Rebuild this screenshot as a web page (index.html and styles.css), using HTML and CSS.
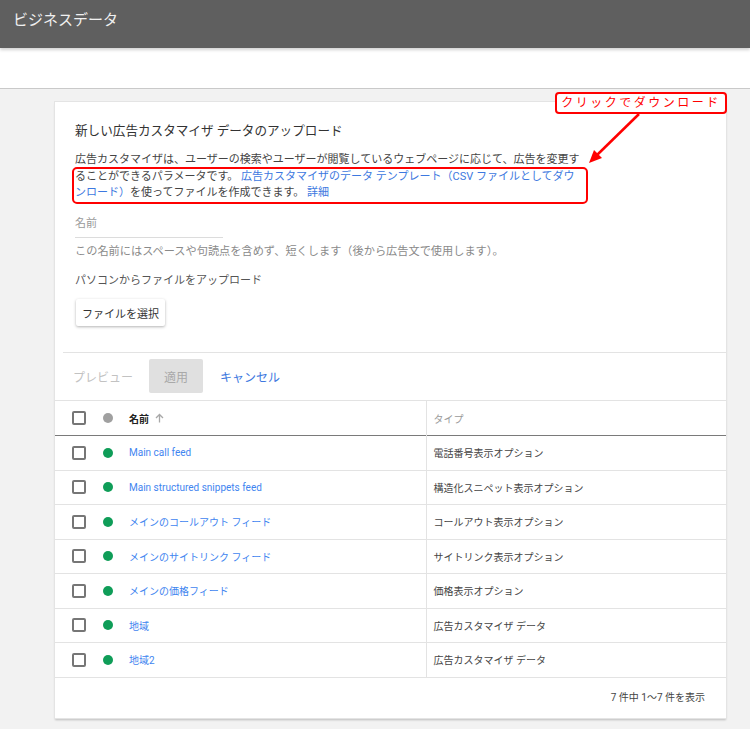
FILE: index.html
```html
<!DOCTYPE html>
<html lang="ja">
<head>
<meta charset="utf-8">
<title>ビジネスデータ</title>
<link rel="stylesheet" href="styles.css">
</head>
<body>
<header class="topbar"><span class="topbar-title">ビジネスデータ</span></header>
<div class="subbar"></div>
<main class="content">
  <section class="card">
    <div class="form">
      <h1 class="form-title">新しい広告カスタマイザ データのアップロード</h1>
      <p class="desc">広告カスタマイザは、ユーザーの検索やユーザーが閲覧しているウェブページに応じて、広告を変更す<br>ることができるパラメータです。 <a class="link">広告カスタマイザのデータ テンプレート（CSV ファイルとしてダウ<br>ンロード）</a>を使ってファイルを作成できます。 <a class="link">詳細</a></p>
      <div class="field">名前</div>
      <p class="hint">この名前にはスペースや句読点を含めず、短くします（後から広告文で使用します）。</p>
      <p class="upload-label">パソコンからファイルをアップロード</p>
      <button class="file-btn">ファイルを選択</button>
    </div>
    <div class="actions">
      <span class="preview">プレビュー</span>
      <button class="apply">適用</button>
      <span class="cancel">キャンセル</span>
    </div>
    <table class="grid">
      <thead>
        <tr>
          <th class="c-name"><div class="namecell"><span class="cb"></span><span class="dot gray"></span><span class="hname">名前</span><svg class="sort" width="9" height="10" viewBox="0 0 9 10"><path d="M4.5 9.5V1.5M1 5L4.5 1.5 8 5" fill="none" stroke="#a8a8a8" stroke-width="1.3"/></svg></div></th>
          <th class="c-type htype">タイプ</th>
        </tr>
      </thead>
      <tbody>
        <tr><td class="c-name"><div class="namecell"><span class="cb"></span><span class="dot"></span><a class="rowlink">Main call feed</a></div></td><td class="c-type">電話番号表示オプション</td></tr>
        <tr><td class="c-name"><div class="namecell"><span class="cb"></span><span class="dot"></span><a class="rowlink">Main structured snippets feed</a></div></td><td class="c-type">構造化スニペット表示オプション</td></tr>
        <tr><td class="c-name"><div class="namecell"><span class="cb"></span><span class="dot"></span><a class="rowlink">メインのコールアウト フィード</a></div></td><td class="c-type">コールアウト表示オプション</td></tr>
        <tr><td class="c-name"><div class="namecell"><span class="cb"></span><span class="dot"></span><a class="rowlink">メインのサイトリンク フィード</a></div></td><td class="c-type">サイトリンク表示オプション</td></tr>
        <tr><td class="c-name"><div class="namecell"><span class="cb"></span><span class="dot"></span><a class="rowlink">メインの価格フィード</a></div></td><td class="c-type">価格表示オプション</td></tr>
        <tr><td class="c-name"><div class="namecell"><span class="cb"></span><span class="dot"></span><a class="rowlink">地域</a></div></td><td class="c-type">広告カスタマイザ データ</td></tr>
        <tr><td class="c-name"><div class="namecell"><span class="cb"></span><span class="dot"></span><a class="rowlink">地域2</a></div></td><td class="c-type">広告カスタマイザ データ</td></tr>
      </tbody>
    </table>
    <div class="footer">7 件中 1～7 件を表示</div>
  </section>
</main>
<div class="highlight"></div>
<div class="callout">クリックでダウンロード</div>
<svg class="arrow" width="750" height="729" viewBox="0 0 750 729">
  <line x1="639" y1="114" x2="596" y2="156" stroke="#ff0000" stroke-width="2.5"/>
  <polygon points="589,163 602,158 594,150" fill="#ff0000"/>
</svg>
</body>
</html>
```

FILE: styles.css
```css
* { box-sizing: border-box; }
html, body { margin: 0; padding: 0; }
body {
  background: #f2f2f2;
  font-family: Roboto, "Noto Sans CJK JP", sans-serif;
  color: #333;
  width: 750px;
  height: 729px;
  overflow: hidden;
  position: relative;
}
.topbar {
  height: 48px;
  background: #5f5f5f;
  padding-left: 13px;
  position: relative;
  z-index: 2;
  box-shadow: 0 2px 3px rgba(0,0,0,0.18);
}
.topbar-title {
  display: block;
  line-height: 40px;
  font-size: 15px;
  color: #f0f0f0;
}
.subbar {
  height: 41px;
  background: #fff;
  border-bottom: 1px solid #c9c9c9;
}
.content {
  padding: 13px 0 0 55px;
}
.card {
  width: 671px;
  background: #fff;
  box-shadow: 0 0 0 1px #e4e4e4, 0 2px 2px rgba(0,0,0,0.22);
}
.form {
  padding: 20px 20px 26px 20px;
}
.form-title {
  margin: 0;
  font-size: 12.6px;
  font-weight: normal;
  line-height: 18px;
  color: #333;
}
.desc {
  margin: 12px 0 0 0;
  font-size: 11px;
  line-height: 16.5px;
  color: #444;
  white-space: nowrap;
}
.link { color: #3d78e0; text-decoration: none; }
.field {
  margin-top: 14.5px;
  width: 148px;
  font-size: 11px;
  line-height: 16px;
  color: #9a9a9a;
  padding-bottom: 5px;
  border-bottom: 1px solid #dcdcdc;
}
.hint {
  margin: 6px 0 0 0;
  font-size: 11.2px;
  line-height: 16px;
  color: #8a8a8a;
}
.upload-label {
  margin: 13px 0 0 0;
  font-size: 11px;
  line-height: 16px;
  color: #555;
}
.file-btn {
  display: block;
  margin: 10px 0 0 1px;
  height: 27px;
  padding: 0 6px;
  border: none;
  border-radius: 2px;
  background: #fff;
  box-shadow: 0 1px 3px rgba(0,0,0,0.3);
  font-family: inherit;
  font-size: 11px;
  color: #333;
}
.actions {
  margin-left: 8px;
  border-top: 1px solid #e3e3e3;
  padding: 6px 0 7px 10px;
  display: flex;
  align-items: center;
  font-size: 12px;
}
.preview { color: #c2c2c2; }
.apply {
  margin-left: 16px;
  width: 54px;
  height: 34px;
  border: none;
  border-radius: 2px;
  background: #e0e0e0;
  color: #a9a9a9;
  font-family: inherit;
  font-size: 12px;
}
.cancel { margin-left: 17px; color: #3d78e0; }
.grid {
  width: 671px;
  border-collapse: collapse;
  table-layout: fixed;
  font-size: 10px;
}
.grid th, .grid td {
  padding: 0;
  text-align: left;
  font-weight: normal;
  vertical-align: middle;
}
.grid thead tr {
  height: 35px;
  border-top: 1px solid #e3e3e3;
  border-bottom: 1px solid #7a7a7a;
}
.grid tbody tr {
  height: 34.5px;
  border-bottom: 1px solid #e3e3e3;
}
.c-name { width: 371px; }
.c-type {
  border-left: 1px solid #e3e3e3;
  padding-left: 7px !important;
  color: #444;
}
.htype { color: #9a9a9a; }
.namecell {
  display: flex;
  align-items: center;
  padding-left: 17px;
}
.cb {
  width: 14px;
  height: 14px;
  border: 2px solid #767676;
  border-radius: 2px;
  flex: none;
}
.dot {
  width: 10px;
  height: 10px;
  border-radius: 50%;
  background: #0f9d58;
  margin-left: 17px;
  flex: none;
}
.dot.gray { background: #a0a0a0; }
.hname {
  margin-left: 16px;
  font-weight: bold;
  color: #222;
}
.sort { margin-left: 6px; }
.rowlink {
  margin-left: 16px;
  color: #3f85f0;
  text-decoration: none;
}
.footer {
  height: 40px;
  line-height: 40px;
  text-align: right;
  padding-right: 21px;
  font-size: 10px;
  color: #444;
}
.highlight {
  position: absolute;
  left: 72px;
  top: 167px;
  width: 516px;
  height: 37px;
  border: 2px solid #ff0000;
  border-radius: 5px;
}
.callout {
  position: absolute;
  left: 555px;
  top: 92px;
  width: 172px;
  height: 22px;
  border: 2px solid #ff0000;
  border-radius: 4px;
  background: #fff;
  color: #ff0000;
  font-size: 12px;
  line-height: 18px;
  letter-spacing: 2.5px;
  text-align: center;
}
.arrow {
  position: absolute;
  left: 0;
  top: 0;
  pointer-events: none;
}
```
